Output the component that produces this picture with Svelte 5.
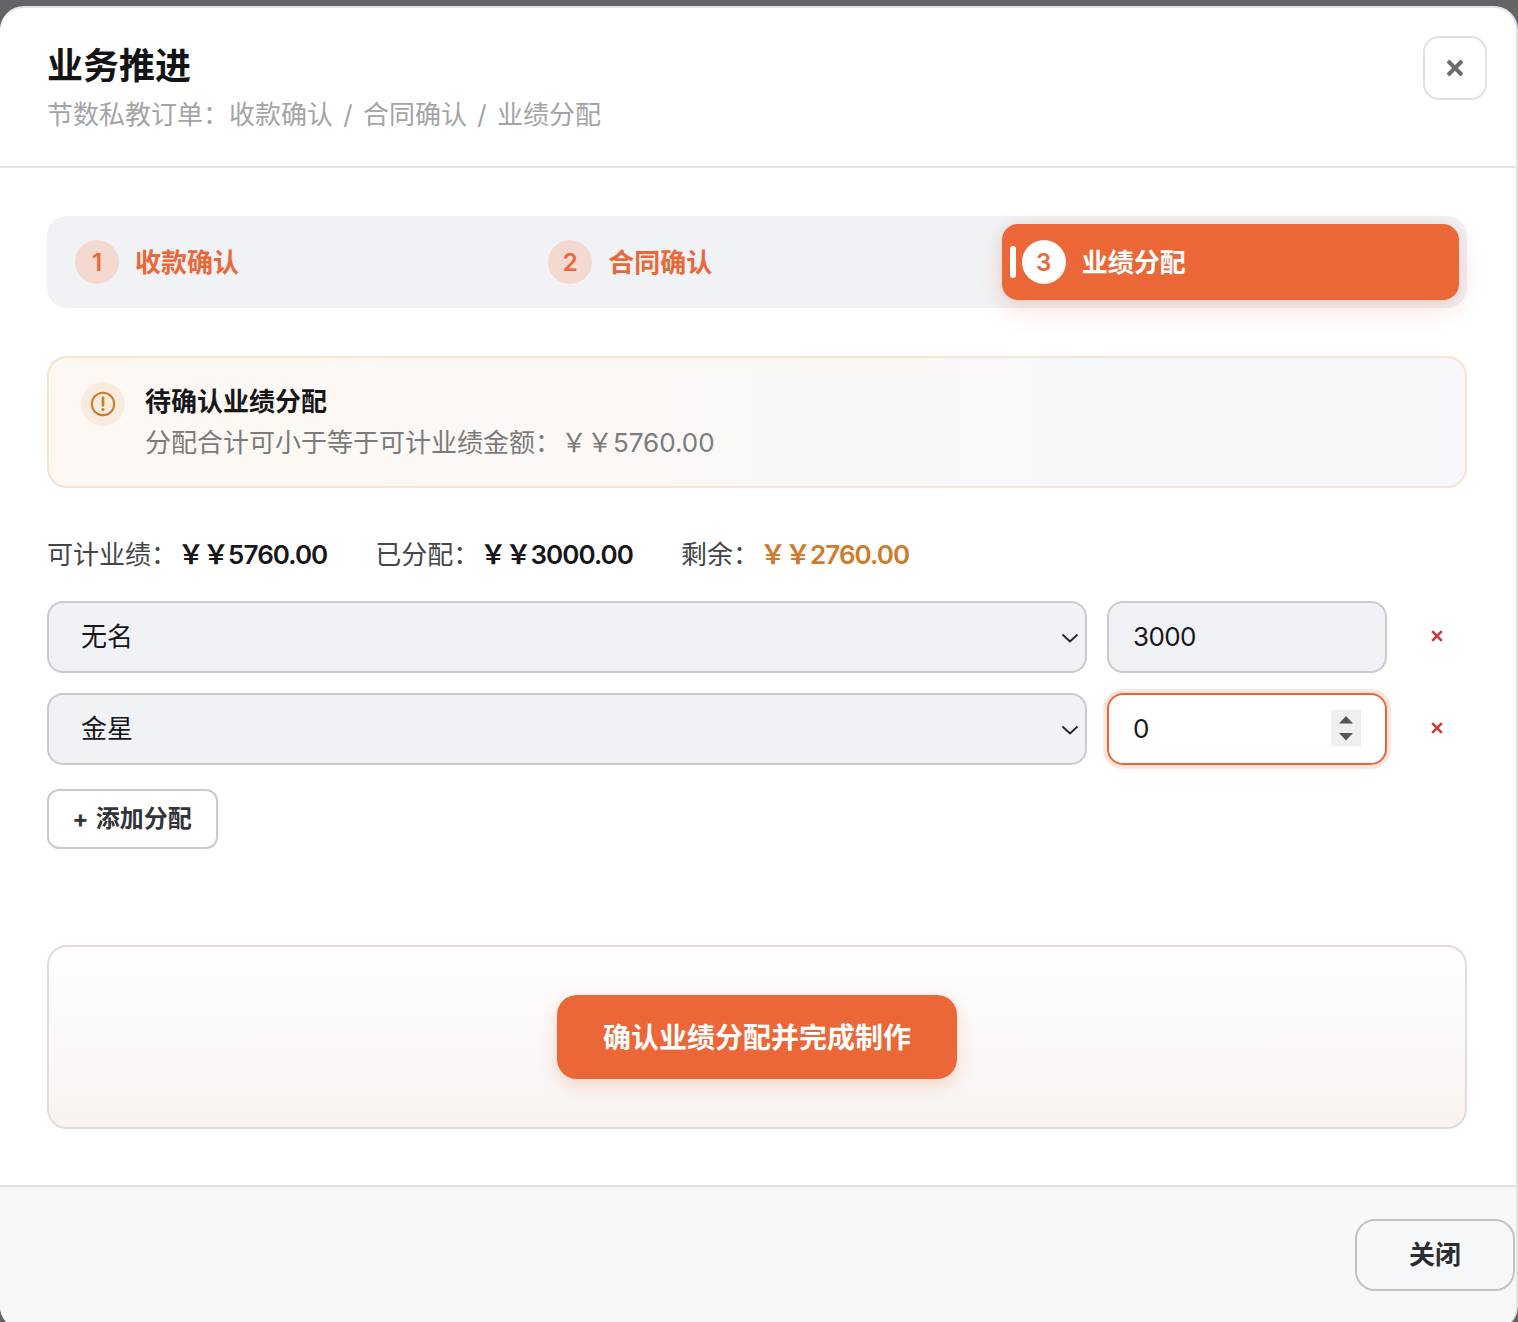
<script lang="ts">
  const steps = [
    { id: 1, label: '收款确认' },
    { id: 2, label: '合同确认' },
    { id: 3, label: '业绩分配' },
  ];
  const current = 3;

  let rows = $state([
    { person: '无名', amount: 3000 },
    { person: '金星', amount: 0 },
  ]);

  const people = ['无名', '金星'];
</script>

<div class="modal">
  <header class="head">
    <div>
      <h2>业务推进</h2>
      <p class="sub">节数私教订单：收款确认 / 合同确认 / 业绩分配</p>
    </div>
    <button class="close-x" aria-label="关闭">
      <svg width="20" height="20" viewBox="0 0 20 20">
        <path d="M3 3 17 17M17 3 3 17" stroke="#6b6d70" stroke-width="4" fill="none" />
      </svg>
    </button>
  </header>

  <main class="body">
    <div class="steps">
      {#each steps as step (step.id)}
        <div class="step" class:active={step.id === current}>
          {#if step.id === current}<span class="bar"></span>{/if}
          <span class="num">{step.id}</span>
          <span class="label">{step.label}</span>
        </div>
      {/each}
    </div>

    <div class="notice">
      <span class="notice-icon">
        <svg width="26" height="26" viewBox="0 0 26 26" fill="none">
          <circle cx="13" cy="13" r="11.2" stroke="#cf7b2c" stroke-width="2" />
          <path d="M13 6.500v8" stroke="#cf7b2c" stroke-width="2.600" stroke-linecap="round" />
          <circle cx="13" cy="18.600" r="1.600" fill="#cf7b2c" />
        </svg>
      </span>
      <div>
        <div class="notice-title">待确认业绩分配</div>
        <div class="notice-text">分配合计可小于等于可计业绩金额：￥￥5760.00</div>
      </div>
    </div>

    <div class="summary">
      <span>可计业绩：<b>￥￥5760.00</b></span>
      <span>已分配：<b>￥￥3000.00</b></span>
      <span>剩余：<b class="left">￥￥2760.00</b></span>
    </div>

    {#each rows as row, i}
      <div class="row">
        <div class="select-wrap">
          <select bind:value={row.person}>
            {#each people as p}
              <option value={p}>{p}</option>
            {/each}
          </select>
          <svg class="chevron" width="18" height="10" viewBox="0 0 18 10" fill="none">
            <path d="M1.500 1.500 9 8.500l7.500-7" stroke="#222" stroke-width="1.800" />
          </svg>
        </div>
        <div class="amount" class:focused={i === 1}>
          <input type="number" bind:value={row.amount} />
          {#if i === 1}
            <span class="spin">
              <svg width="30" height="36" viewBox="0 0 30 36">
                <path d="M15 6 22 13.500H8zM15 30.500 8 23H22z" fill="#555" />
              </svg>
            </span>
          {/if}
        </div>
        <button class="remove" aria-label="删除">
          <svg width="12" height="12" viewBox="0 0 12 12">
            <path d="M1.200 1.200 10.800 10.800M10.800 1.200 1.200 10.800" stroke="#cc3b38" stroke-width="2.600" fill="none" />
          </svg>
        </button>
      </div>
    {/each}

    <button class="add">+ 添加分配</button>

    <div class="cta">
      <button class="confirm">确认业绩分配并完成制作</button>
    </div>
  </main>

  <footer class="foot">
    <button class="close">关闭</button>
  </footer>
</div>

<style>
  :global(body) {
    background: #636468;
    overflow: hidden;
  }

  .modal {
    box-sizing: border-box;
    height: 1324px;
    margin-top: 6px;
    background: #fff;
    border: 2px solid #e2e3e6;
    border-left: 0;
    border-bottom: 0;
    border-radius: 24px;
    overflow: hidden;
    display: flex;
    flex-direction: column;
    font-family: Inter, 'Noto Sans CJK SC', sans-serif;
    color: #1a1a1c;
  }

  .head {
    box-sizing: border-box;
    height: 160px;
    flex-shrink: 0;
    display: flex;
    justify-content: space-between;
    align-items: flex-start;
    padding: 28px 29px 0 47px;
    border-bottom: 2px solid #e2e3e6;
  }

  h2 {
    margin: 0;
    font-size: 36px;
    line-height: 60px;
    font-weight: 700;
    color: #141416;
  }

  .sub {
    margin: 0;
    font-size: 26px;
    line-height: 37px;
    word-spacing: 3px;
    color: #a3a4a6;
  }

  .close-x {
    width: 64px;
    height: 64px;
    box-sizing: border-box;
    background: #fff;
    border: 2px solid #e0e1e3;
    border-radius: 16px;
    display: flex;
    align-items: center;
    justify-content: center;
    padding: 0;
  }

  .body {
    flex: 1;
    padding: 48px 49px 0 47px;
  }

  .steps {
    display: grid;
    grid-template-columns: repeat(3, 1fr);
    gap: 16px;
    padding: 8px;
    background: #f1f2f6;
    border-radius: 20px;
  }

  .step {
    position: relative;
    height: 76px;
    display: flex;
    align-items: center;
    gap: 16px;
    padding-left: 20px;
    border-radius: 16px;
    color: #ec6737;
    font-size: 26px;
    font-weight: 700;
  }

  .step.active {
    background: #ec6737;
    color: #fff;
    box-shadow: 0 8px 24px rgba(236, 103, 55, 0.22), 0 0 14px rgba(0, 0, 0, 0.05);
  }

  .num {
    width: 44px;
    height: 44px;
    flex-shrink: 0;
    border-radius: 50%;
    background: #f3d9d0;
    display: flex;
    align-items: center;
    justify-content: center;
    font-size: 24px;
    font-weight: 600;
  }

  .active .num {
    background: #fff;
    color: #ec6737;
  }

  .label {
    margin-top: -4px;
  }

  .bar {
    position: absolute;
    left: 8px;
    top: 22px;
    width: 6px;
    height: 32px;
    border-radius: 3px;
    background: #fff;
  }

  .notice {
    box-sizing: border-box;
    height: 132px;
    margin-top: 48px;
    display: flex;
    align-items: flex-start;
    gap: 20px;
    padding: 24px 32px;
    border: 2px solid #f5e3d3;
    border-radius: 20px;
    background: linear-gradient(90deg, #fdf8f3, #f8f8fa);
  }

  .notice-icon {
    width: 44px;
    height: 44px;
    flex-shrink: 0;
    border-radius: 50%;
    background: #f9ecdf;
    display: flex;
    align-items: center;
    justify-content: center;
  }

  .notice-title {
    font-size: 26px;
    line-height: 40px;
    font-weight: 700;
    color: #17171a;
  }

  .notice-text {
    font-size: 26px;
    line-height: 42px;
    color: #7b7b7b;
  }

  .summary {
    display: flex;
    gap: 48px;
    margin: 46px 0 25px;
    font-size: 26px;
    line-height: 42px;
    color: #444548;
  }

  .summary b {
    margin-left: 1px;
    font-weight: 600;
    letter-spacing: -0.95px;
    color: #17171a;
  }

  .summary b.left {
    color: #cf7b2c;
  }

  .row {
    display: flex;
    gap: 20px;
    margin-bottom: 20px;
    align-items: center;
  }

  .select-wrap {
    position: relative;
    flex: 1;
  }

  select,
  input {
    box-sizing: border-box;
    width: 100%;
    height: 72px;
    border: 2px solid #c9cacf;
    border-radius: 16px;
    background: #f1f2f6;
    font: inherit;
    font-size: 26px;
    color: #17171a;
    outline: none;
  }

  select {
    appearance: none;
    padding: 0 32px 2px;
  }

  .chevron {
    position: absolute;
    right: 8px;
    top: 32px;
    pointer-events: none;
  }

  .amount {
    position: relative;
    width: 280px;
  }

  input {
    padding: 0 24px 2px;
    letter-spacing: -0.6px;
    appearance: textfield;
  }

  input::-webkit-outer-spin-button,
  input::-webkit-inner-spin-button {
    appearance: none;
    margin: 0;
  }

  .focused input {
    background: #fff;
    border-color: #ec6737;
    box-shadow: 0 0 0 4px rgba(236, 103, 55, 0.16);
  }

  .spin {
    position: absolute;
    right: 26px;
    top: 17px;
    display: block;
    height: 36px;
    background: #efefef;
  }

  .spin svg {
    display: block;
  }

  .remove {
    width: 60px;
    height: 60px;
    padding: 0 0 2px;
    border: 0;
    background: none;
    display: flex;
    align-items: center;
    justify-content: center;
  }

  .add {
    box-sizing: border-box;
    width: 171px;
    height: 60px;
    margin-top: 4px;
    padding: 0 1px 5px 0;
    background: #fff;
    border: 2px solid #c9cacf;
    border-radius: 12px;
    font: inherit;
    font-size: 24px;
    font-weight: 700;
    word-spacing: 1.500px;
    color: #333437;
  }

  .cta {
    box-sizing: border-box;
    height: 184px;
    margin-top: 96px;
    display: flex;
    align-items: center;
    justify-content: center;
    border: 2px solid #e6dbd9;
    border-radius: 20px;
    background: linear-gradient(180deg, #fefefe, #f8f3f1);
  }

  .confirm {
    width: 400px;
    height: 84px;
    padding: 0 0 2px;
    border: 0;
    border-radius: 20px;
    background: #ec6737;
    color: #fff;
    font: inherit;
    font-size: 28px;
    font-weight: 700;
    box-shadow: 0 6px 18px rgba(236, 103, 55, 0.24);
  }

  .foot {
    box-sizing: border-box;
    height: 145px;
    flex-shrink: 0;
    background: #f7f8fa;
    border-top: 2px solid #e0e1e4;
    padding: 32px 1px 0 0;
    display: flex;
    justify-content: flex-end;
    align-items: flex-start;
  }

  .close {
    box-sizing: border-box;
    width: 160px;
    height: 72px;
    padding: 0 0 5px;
    background: none;
    border: 2px solid #c2c3c6;
    border-radius: 20px;
    font: inherit;
    font-size: 26px;
    font-weight: 700;
    color: #2c2d30;
  }
</style>
